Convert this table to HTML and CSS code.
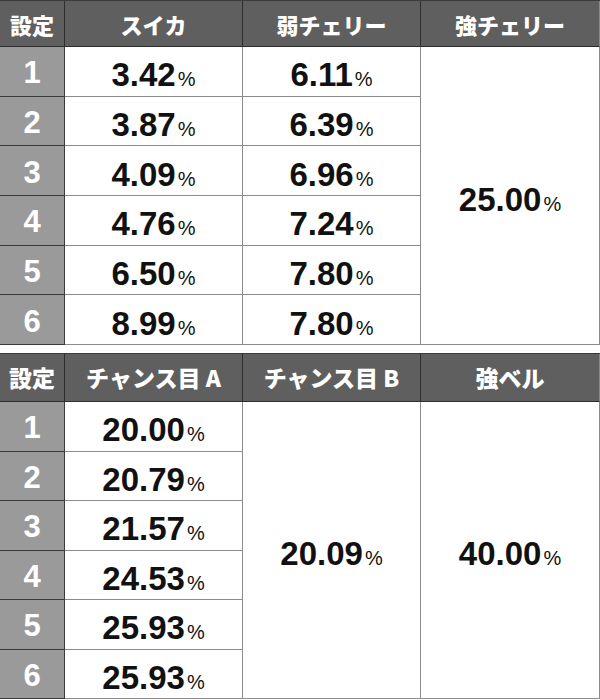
FILE: index.html
```html
<!DOCTYPE html>
<html lang="ja">
<head>
<meta charset="utf-8">
<link rel="stylesheet" href="styles.css">
</head>
<body>
<table class="rate rate-top">
  <colgroup><col class="c-set"><col class="c-a"><col class="c-b"><col class="c-c"></colgroup>
  <thead>
    <tr><th>設定</th><th>スイカ</th><th>弱チェリー</th><th class="last">強チェリー</th></tr>
  </thead>
  <tbody>
    <tr><td class="set">1</td><td>3.42<span class="pct">%</span></td><td>6.11<span class="pct">%</span></td><td class="last merged" rowspan="6">25.00<span class="pct">%</span></td></tr>
    <tr><td class="set">2</td><td>3.87<span class="pct">%</span></td><td>6.39<span class="pct">%</span></td></tr>
    <tr><td class="set">3</td><td>4.09<span class="pct">%</span></td><td>6.96<span class="pct">%</span></td></tr>
    <tr><td class="set">4</td><td>4.76<span class="pct">%</span></td><td>7.24<span class="pct">%</span></td></tr>
    <tr><td class="set">5</td><td>6.50<span class="pct">%</span></td><td>7.80<span class="pct">%</span></td></tr>
    <tr><td class="set">6</td><td>8.99<span class="pct">%</span></td><td>7.80<span class="pct">%</span></td></tr>
  </tbody>
</table>
<table class="rate rate-bottom">
  <colgroup><col class="c-set"><col class="c-a"><col class="c-b"><col class="c-c"></colgroup>
  <thead>
    <tr><th>設定</th><th>チャンス目 A</th><th>チャンス目 B</th><th class="last">強ベル</th></tr>
  </thead>
  <tbody>
    <tr><td class="set">1</td><td>20.00<span class="pct">%</span></td><td class="merged" rowspan="6">20.09<span class="pct">%</span></td><td class="last merged" rowspan="6">40.00<span class="pct">%</span></td></tr>
    <tr><td class="set">2</td><td>20.79<span class="pct">%</span></td></tr>
    <tr><td class="set">3</td><td>21.57<span class="pct">%</span></td></tr>
    <tr><td class="set">4</td><td>24.53<span class="pct">%</span></td></tr>
    <tr><td class="set">5</td><td>25.93<span class="pct">%</span></td></tr>
    <tr><td class="set">6</td><td>25.93<span class="pct">%</span></td></tr>
  </tbody>
</table>
</body>
</html>
```
FILE: styles.css
```css
html, body {
  margin: 0;
  padding: 0;
  background: #ffffff;
}
body {
  font-family: "Liberation Sans", "Noto Sans CJK JP", sans-serif;
  color: #111111;
}
.rate {
  width: 600px;
  border-collapse: separate;
  border-spacing: 0;
  table-layout: fixed;
  border-top: 1px solid #3c3c3c;
}
.rate-bottom {
  margin-top: 8px;
}
.c-set { width: 65px; }
.c-a { width: 178px; }
.c-b { width: 178px; }
.c-c { width: 179px; }

.rate th {
  background: #5f5f5f;
  color: #ffffff;
  font-family: "Noto Sans CJK JP", "Liberation Sans", sans-serif;
  font-weight: 900;
  font-size: 22px;
  line-height: 1;
  padding: 0;
  text-align: center;
  border-right: 1px solid #2e2e2e;
  border-bottom: 1px solid #2e2e2e;
}
.rate th.last { border-right: 1px solid #8a8a8a; }
.rate-top thead tr { height: 46px; }
.rate-bottom thead tr { height: 48px; }
.rate-bottom th { font-size: 23px; }

.rate td {
  padding: 7px 0 0 0;
  text-align: center;
  font-weight: 700;
  font-size: 33px;
  line-height: 1;
  border-right: 1px solid #8c8c8c;
  border-bottom: 1px solid #8c8c8c;
}
.rate-top tbody tr { height: 49.7px; }
.rate-bottom tbody tr { height: 49.5px; }

.rate td.set {
  background: #9a9a9a;
  color: #ffffff;
  font-size: 31px;
  padding-top: 3px;
  border-right: 1px solid #3a3a3a;
  border-bottom: 1px solid #3a3a3a;
}
.rate td.last { border-right: 1px solid #8c8c8c; }
.pct {
  font-size: 20px;
  font-weight: 400;
  margin-left: 2px;
}
```
